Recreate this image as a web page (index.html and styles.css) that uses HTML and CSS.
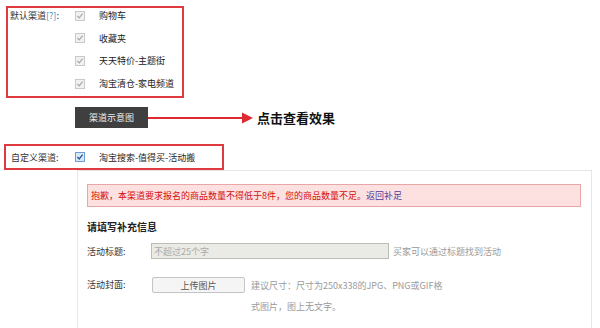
FILE: index.html
```html
<!DOCTYPE html>
<html lang="zh-CN">
<head>
<meta charset="utf-8">
<title>渠道设置</title>
<link rel="stylesheet" href="styles.css">
</head>
<body>
<div class="page">
  <div class="box box-default">
    <div class="row">
      <span class="lbl">默认渠道<span class="q">[?]</span>:</span>
      <svg class="cb" viewBox="0 0 10 10"><rect x="0.5" y="0.5" width="9" height="9" fill="#f1f1f1" stroke="#c9c9c9"/><path d="M2.4 5 L4.2 6.9 L7.6 2.7" fill="none" stroke="#a9a9a9" stroke-width="1.2"/></svg>
      <span class="opt">购物车</span>
    </div>
    <div class="row">
      <span class="lbl"></span>
      <svg class="cb" viewBox="0 0 10 10"><rect x="0.5" y="0.5" width="9" height="9" fill="#f1f1f1" stroke="#c9c9c9"/><path d="M2.4 5 L4.2 6.9 L7.6 2.7" fill="none" stroke="#a9a9a9" stroke-width="1.2"/></svg>
      <span class="opt">收藏夹</span>
    </div>
    <div class="row">
      <span class="lbl"></span>
      <svg class="cb" viewBox="0 0 10 10"><rect x="0.5" y="0.5" width="9" height="9" fill="#f1f1f1" stroke="#c9c9c9"/><path d="M2.4 5 L4.2 6.9 L7.6 2.7" fill="none" stroke="#a9a9a9" stroke-width="1.2"/></svg>
      <span class="opt">天天特价-主题街</span>
    </div>
    <div class="row">
      <span class="lbl"></span>
      <svg class="cb" viewBox="0 0 10 10"><rect x="0.5" y="0.5" width="9" height="9" fill="#f1f1f1" stroke="#c9c9c9"/><path d="M2.4 5 L4.2 6.9 L7.6 2.7" fill="none" stroke="#a9a9a9" stroke-width="1.2"/></svg>
      <span class="opt">淘宝清仓-家电频道</span>
    </div>
  </div>

  <div class="demo">
    <span class="btn-dark">渠道示意图</span>
    <svg class="arrow" width="109" height="12" viewBox="0 0 109 12"><line x1="0" y1="6" x2="96" y2="6" stroke="#dc2a30" stroke-width="2"/><polygon points="94,0.5 105,6 94,11.5" fill="#dc2a30"/></svg>
    <strong class="tip">点击查看效果</strong>
  </div>

  <div class="box box-custom">
    <div class="row">
      <span class="lbl">自定义渠道:</span>
      <svg class="cb" viewBox="0 0 10 10"><rect x="0.5" y="0.5" width="9" height="9" fill="#d9e8f7" stroke="#6f9ed3"/><path d="M2.4 5 L4.2 6.9 L7.6 2.7" fill="none" stroke="#23549e" stroke-width="1.3"/></svg>
      <span class="opt">淘宝搜索-值得买-活动搬</span>
    </div>
  </div>

  <div class="panel">
    <div class="alert">抱歉，本渠道要求报名的商品数量不得低于8件，您的商品数量不足。<a class="link" href="#">返回补足</a></div>
    <h3 class="sub">请填写补充信息</h3>
    <div class="frow">
      <span class="flbl">活动标题:</span>
      <input class="inp" type="text" placeholder="不超过25个字">
      <span class="hint">买家可以通过标题找到活动</span>
    </div>
    <div class="frow frow-cover">
      <span class="flbl">活动封面:</span>
      <span class="upload">上传图片</span>
      <p class="hint hint-wrap">建议尺寸：尺寸为250x338的JPG、PNG或GIF格<br>式图片，图上无文字。</p>
    </div>
  </div>
</div>
</body>
</html>
```

FILE: styles.css
```css
* { box-sizing: border-box; }
html, body { margin: 0; padding: 0; background: #fff; }
body {
  font-family: "Noto Sans CJK SC", "Liberation Sans", sans-serif;
  font-size: 9px;
  color: #333;
  width: 600px;
  height: 328px;
  overflow: hidden;
}
.page { display: flex; flex-direction: column; align-items: flex-start; }

.box { border: 2px solid #df3a3f; }
.box-default {
  margin: 6px 0 0 6px;
  width: 178px;
  height: 92px;
  padding: 0 0 0 2px;
  display: flex;
  flex-direction: column;
  gap: 7.7px;
}
.box-custom {
  margin: 16px 0 0 4px;
  width: 220px;
  height: 26px;
  padding: 0 0 0 5px;
  display: flex;
  align-items: center;
}
.row {
  display: flex;
  align-items: center;
  height: 15px;
  line-height: 15px;
}
.box-default .lbl { width: 65px; }
.box-custom .lbl { width: 64px; }
.q { color: #3d8fc8; }
.cb { width: 10px; height: 10px; flex: none; }
.opt { margin-left: 14px; color: #222; }

.demo {
  margin: 9px 0 0 75px;
  display: flex;
  align-items: center;
}
.btn-dark {
  width: 73px;
  height: 21px;
  background: #3f3f3f;
  color: #eee;
  display: flex;
  align-items: center;
  justify-content: center;
}
.arrow { display: block; flex: none; }
.tip { font-size: 13px; font-weight: 700; color: #111; margin-left: 0; line-height: 16px; }

.panel {
  margin-left: 77px;
  width: 515px;
  height: 170px;
  border: 1px solid #e6e6e6;
  padding: 13px 10px 0 9px;
  display: flex;
  flex-direction: column;
}
.alert {
  height: 23px;
  line-height: 21px;
  border: 1px solid #e8a6a6;
  background: #fde1e1;
  color: #d40f0f;
  padding-left: 3px;
}
.link { color: #4e3a9c; text-decoration: none; }
.sub {
  margin: 13px 0 0;
  font-size: 10px;
  font-weight: 700;
  line-height: 14px;
  color: #222;
}
.frow { display: flex; align-items: center; margin-top: 9px; height: 16px; }
.flbl { width: 64px; flex: none; }
.inp {
  width: 238px;
  height: 16px;
  border: 1px solid #bdbdb8;
  background: #ebebe6;
  padding: 0 2px;
  margin: 0;
  font: inherit;
  outline: none;
}
.inp::placeholder { color: #aaa; }
.hint { color: #9a9a9a; margin-left: 4px; }
.frow-cover { margin-top: 18px; align-items: flex-start; }
.frow-cover .flbl { line-height: 16px; }
.upload {
  margin-left: 1px;
  width: 93px;
  height: 16px;
  border: 1px solid #c4c4c4;
  border-radius: 2px;
  background: #f5f5f5;
  color: #555;
  display: flex;
  align-items: center;
  justify-content: center;
}
.hint-wrap { margin: -2.5px 0 0 6px; line-height: 21px; }
```
